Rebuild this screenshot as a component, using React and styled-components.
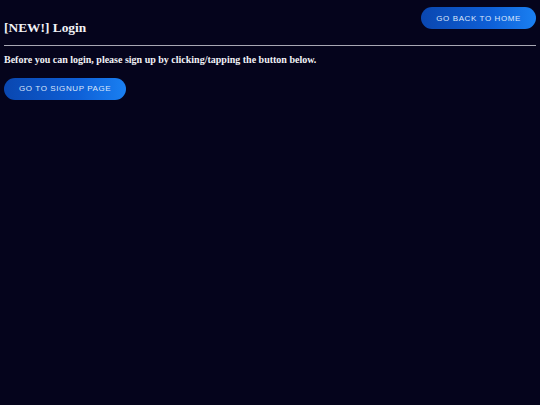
import React from "react"
import styled, { createGlobalStyle } from "styled-components"

const GlobalStyle = createGlobalStyle`
  html, body {
    margin: 0;
    background: #05041c;
    min-height: 100%;
  }
  body {
    font-family: "Liberation Serif", "Times New Roman", serif;
    color: #f2f2f7;
  }
`

const Page = styled.div`
  padding: 7px 4px 0 4px;
  min-height: 398px;
`

const Header = styled.div`
  display: flex;
  justify-content: space-between;
  align-items: flex-start;
`

const Title = styled.h1`
  margin: 12px 0 0 0;
  font-size: 13.4px;
  line-height: 17px;
  font-weight: bold;
`

const Rule = styled.hr`
  margin: 9px 0 0 0;
  border: none;
  height: 1px;
  background: #a8a8b4;
`

const Note = styled.p`
  margin: 8px 0 0 0;
  font-size: 10px;
  line-height: 11px;
  font-weight: bold;
`

const PillButton = styled.button`
  display: inline-flex;
  align-items: center;
  justify-content: center;
  height: 22px;
  padding: 0 ${(p) => p.$pad}px;
  border: none;
  border-radius: 11px;
  background: linear-gradient(90deg, #0a47b0 0%, #0e5fd6 60%, #1a80f2 100%);
  color: #dbe6fb;
  font-family: "Liberation Sans", Arial, sans-serif;
  font-size: 8px;
  letter-spacing: 0.6px;
  text-transform: uppercase;
  cursor: pointer;
`

const Actions = styled.div`
  margin-top: 12px;
`

export default function App() {
  return (
    <>
      <GlobalStyle />
      <Page>
        <Header>
          <Title>[NEW!] Login</Title>
          <PillButton $pad={15}>Go back to home</PillButton>
        </Header>
        <Rule />
        <Note>Before you can login, please sign up by clicking/tapping the button below.</Note>
        <Actions>
          <PillButton $pad={15}>Go to signup page</PillButton>
        </Actions>
      </Page>
    </>
  )
}
